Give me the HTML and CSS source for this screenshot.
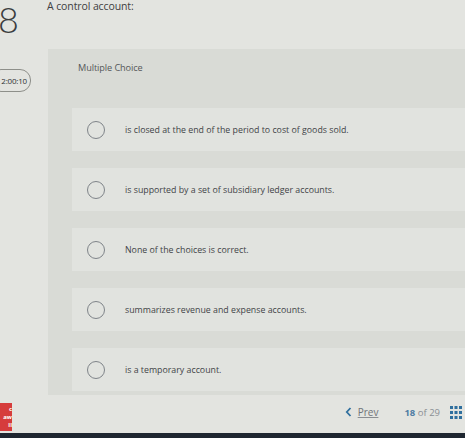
FILE: index.html
```html
<!DOCTYPE html>
<html>
<head>
<meta charset="utf-8">
<link rel="stylesheet" href="styles.css">
</head>
<body>
<div class="screen">
  <div class="top">
    <div class="qnum">8</div>
    <div class="qtext">A control account:</div>
  </div>
  <div class="middle">
    <div class="side">
      <div class="timer">2:00:10</div>
    </div>
    <div class="panel">
      <div class="type">Multiple Choice</div>
      <div class="options">
        <div class="opt"><span class="radio"></span><span class="label">is closed at the end of the period to cost of goods sold.</span></div>
        <div class="opt"><span class="radio"></span><span class="label">is supported by a set of subsidiary ledger accounts.</span></div>
        <div class="opt"><span class="radio"></span><span class="label">None of the choices is correct.</span></div>
        <div class="opt"><span class="radio"></span><span class="label">summarizes revenue and expense accounts.</span></div>
        <div class="opt"><span class="radio"></span><span class="label">is a temporary account.</span></div>
      </div>
    </div>
  </div>
  <div class="footer">
    <div class="logo"><span>c</span><span>aw</span><span>ll</span></div>
    <div class="nav">
      <span class="prev"><svg width="7" height="10" viewBox="0 0 7 10"><path d="M5.5 1 L1.8 5 L5.5 9" fill="none" stroke="#2f6f9e" stroke-width="1.8"/></svg><span class="prevtxt">Prev</span></span>
      <span class="count"><b>18</b> of 29</span>
      <svg class="grid" width="12" height="13" viewBox="0 0 12 13">
        <rect x="0" y="0" width="3" height="3" fill="#2f6f9e"/><rect x="4.5" y="0" width="3" height="3" fill="#2f6f9e"/><rect x="9" y="0" width="3" height="3" fill="#2f6f9e"/>
        <rect x="0" y="5" width="3" height="3" fill="#2f6f9e"/><rect x="4.5" y="5" width="3" height="3" fill="#2f6f9e"/><rect x="9" y="5" width="3" height="3" fill="#2f6f9e"/>
        <rect x="0" y="10" width="3" height="3" fill="#2f6f9e"/><rect x="4.5" y="10" width="3" height="3" fill="#2f6f9e"/><rect x="9" y="10" width="3" height="3" fill="#2f6f9e"/>
      </svg>
    </div>
  </div>
  <div class="bezel"></div>
</div>
</body>
</html>
```
FILE: styles.css
```css
html, body {
  margin: 0;
  padding: 0;
  background: #e2e3df;
}
body {
  width: 465px;
  height: 438px;
  overflow: hidden;
  font-family: "Open Sans", Lato, sans-serif;
}
.screen {
  width: 465px;
  height: 438px;
  display: flex;
  flex-direction: column;
  background: #e3e4e0;
}
.top {
  height: 49px;
  display: flex;
  flex-shrink: 0;
}
.qnum {
  width: 29px;
  height: 46px;
  font-family: Lato, sans-serif;
  font-size: 36px;
  line-height: 36px;
  color: #3b3d3f;
  text-indent: -2px;
  padding-top: 1px;
  font-weight: 300;
}
.qtext {
  margin-left: 18px;
  margin-top: 0;
  font-size: 10.5px;
  line-height: 12px;
  color: #3e4042;
  letter-spacing: -0.1px;
}
.middle {
  display: flex;
  flex: 1;
}
.side {
  width: 48px;
  flex-shrink: 0;
  padding-top: 20px;
}
.timer {
  width: 36px;
  height: 21px;
  margin-left: -10px;
  border: 1px solid #8e8f8a;
  border-radius: 11px;
  font-size: 8px;
  line-height: 21px;
  text-align: right;
  padding-right: 3px;
  box-sizing: content-box;
  color: #2f3133;
  letter-spacing: -0.2px;
}
.panel {
  flex: 1;
  background: #d9dbd6;
  height: 346px;
  padding-top: 12px;
  box-sizing: border-box;
}
.type {
  margin-left: 30px;
  font-size: 9.2px;
  color: #555759;
  height: 47px;
  letter-spacing: -0.1px;
}
.options {
  display: flex;
  flex-direction: column;
  gap: 17px;
  padding-left: 24px;
}
.opt {
  height: 43px;
  background: #e1e3df;
  display: flex;
  align-items: center;
}
.radio {
  width: 16px;
  height: 16px;
  border: 1.5px solid #7f8489;
  border-radius: 50%;
  margin-left: 15px;
  flex-shrink: 0;
}
.label {
  margin-left: 20px;
  font-size: 8.8px;
  color: #424447;
  letter-spacing: 0;
}
.footer {
  height: 38px;
  display: flex;
  align-items: center;
  justify-content: space-between;
  background: #e3e4e0;
}
.logo {
  width: 12px;
  height: 28px;
  background: #d63c3c;
  color: #fff;
  font-size: 6px;
  font-weight: 700;
  line-height: 8px;
  display: flex;
  flex-direction: column;
  align-items: flex-end;
  padding-top: 2px;
  box-sizing: border-box;
  overflow: hidden;
  margin-top: 6px;
}
.nav {
  display: flex;
  align-items: center;
  margin-right: 3px;
  margin-top: -4px;
}
.prev {
  display: flex;
  align-items: center;
  gap: 6px;
  font-size: 10px;
  color: #6f7378;
}
.prevtxt {
  text-decoration: underline;
  text-decoration-color: #8a8d91;
}
.count {
  margin-left: 26px;
  font-size: 9.5px;
  color: #8a8e94;
}
.count b {
  color: #4f7da3;
  font-weight: 700;
}
.grid {
  margin-left: 10px;
}
.bezel {
  height: 5px;
  background: #1f2630;
  flex-shrink: 0;
}
```
